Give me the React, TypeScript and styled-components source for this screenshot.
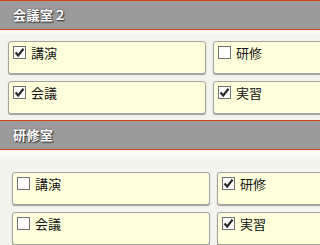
import React from 'react';
import styled, { createGlobalStyle } from 'styled-components';

const GlobalStyle = createGlobalStyle`
  html, body {
    margin: 0;
    padding: 0;
    background: #f4f4ef;
    overflow: hidden;
  }
  body {
    font-family: "Noto Sans CJK JP", "DejaVu Sans", sans-serif;
  }
`;

const Page = styled.div`
  width: 100%;
  min-width: 289px;
  height: 245px;
  overflow: hidden;
  background: #f4f4ef;
`;

const Section = styled.section<{ $padTop: number; $padLeft: number; $padBottom: number }>`
  padding-bottom: ${({ $padBottom }) => $padBottom}px;
  --pad-top: ${({ $padTop }) => $padTop}px;
  --pad-left: ${({ $padLeft }) => $padLeft}px;
`;

const Header = styled.h2`
  margin: 0;
  height: 28px;
  border-top: 1px solid #d2401c;
  border-bottom: 1px solid #d2401c;
  background: #9b9b9b;
  color: #fff;
  font-size: 13px;
  font-weight: bold;
  line-height: 28px;
  padding-left: 13px;
  text-shadow: 1px 1px 1px #333, 0 0 2px #555;
  letter-spacing: 0.5px;
`;

const Band = styled.div<{ $height: number }>`
  height: ${({ $height }) => $height}px;
  background: linear-gradient(#ffffff, #f4f4ef);
`;

const Grid = styled.div<{ $gap: number }>`
  display: grid;
  grid-template-columns: 198px 198px;
  gap: ${({ $gap }) => $gap}px;
  padding-top: var(--pad-top);
  padding-left: var(--pad-left);
`;

const Card = styled.label`
  box-sizing: border-box;
  height: 33px;
  display: flex;
  align-items: flex-start;
  gap: 5px;
  padding: 3px 4px;
  background: #ffffdc;
  border: 1px solid #a3a3a3;
  border-radius: 3px;
  box-shadow: 0 1px 1px rgba(0, 0, 0, 0.35);
  font-size: 13px;
  line-height: 14px;
  color: #111;
`;

const Box = styled.span`
  box-sizing: border-box;
  width: 13px;
  height: 13px;
  margin-top: 1px;
  border: 1px solid #707070;
  background: #fff;
  display: flex;
  align-items: center;
  justify-content: center;
  flex-shrink: 0;
`;

const Label = styled.span`
  padding-top: 1px;
`;

const Check = ({ on }: { on: boolean }) => (
  <Box>
    {on && (
      <svg width="11" height="11" viewBox="0 0 11 11">
        <path d="M1.5 5.5 L4.2 8.5 L9.5 1.8" fill="none" stroke="#2a2a2a" strokeWidth="2.2" />
      </svg>
    )}
  </Box>
);

interface Item {
  label: string;
  checked: boolean;
}

const Room = ({
  title,
  items,
  band,
  padTop,
  padLeft,
  padBottom,
  gap,
}: {
  title: string;
  items: Item[];
  band: number;
  padTop: number;
  padLeft: number;
  padBottom: number;
  gap: number;
}) => (
  <Section $padTop={padTop} $padLeft={padLeft} $padBottom={padBottom}>
    <Header>{title}</Header>
    <Band $height={band} />
    <Grid $gap={gap}>
      {items.map((it) => (
        <Card key={it.label}>
          <Check on={it.checked} />
          <Label>{it.label}</Label>
        </Card>
      ))}
    </Grid>
  </Section>
);

const App: React.FC = () => (
  <Page>
    <GlobalStyle />
    <Room
      title="会議室２"
      band={5}
      padTop={6}
      padLeft={8}
      padBottom={6}
      gap={7}
      items={[
        { label: '講演', checked: true },
        { label: '研修', checked: false },
        { label: '会議', checked: true },
        { label: '実習', checked: true },
      ]}
    />
    <Room
      title="研修室"
      band={11}
      padTop={11}
      padLeft={12}
      padBottom={0}
      gap={7}
      items={[
        { label: '講演', checked: false },
        { label: '研修', checked: true },
        { label: '会議', checked: false },
        { label: '実習', checked: true },
      ]}
    />
  </Page>
);

export default App;
